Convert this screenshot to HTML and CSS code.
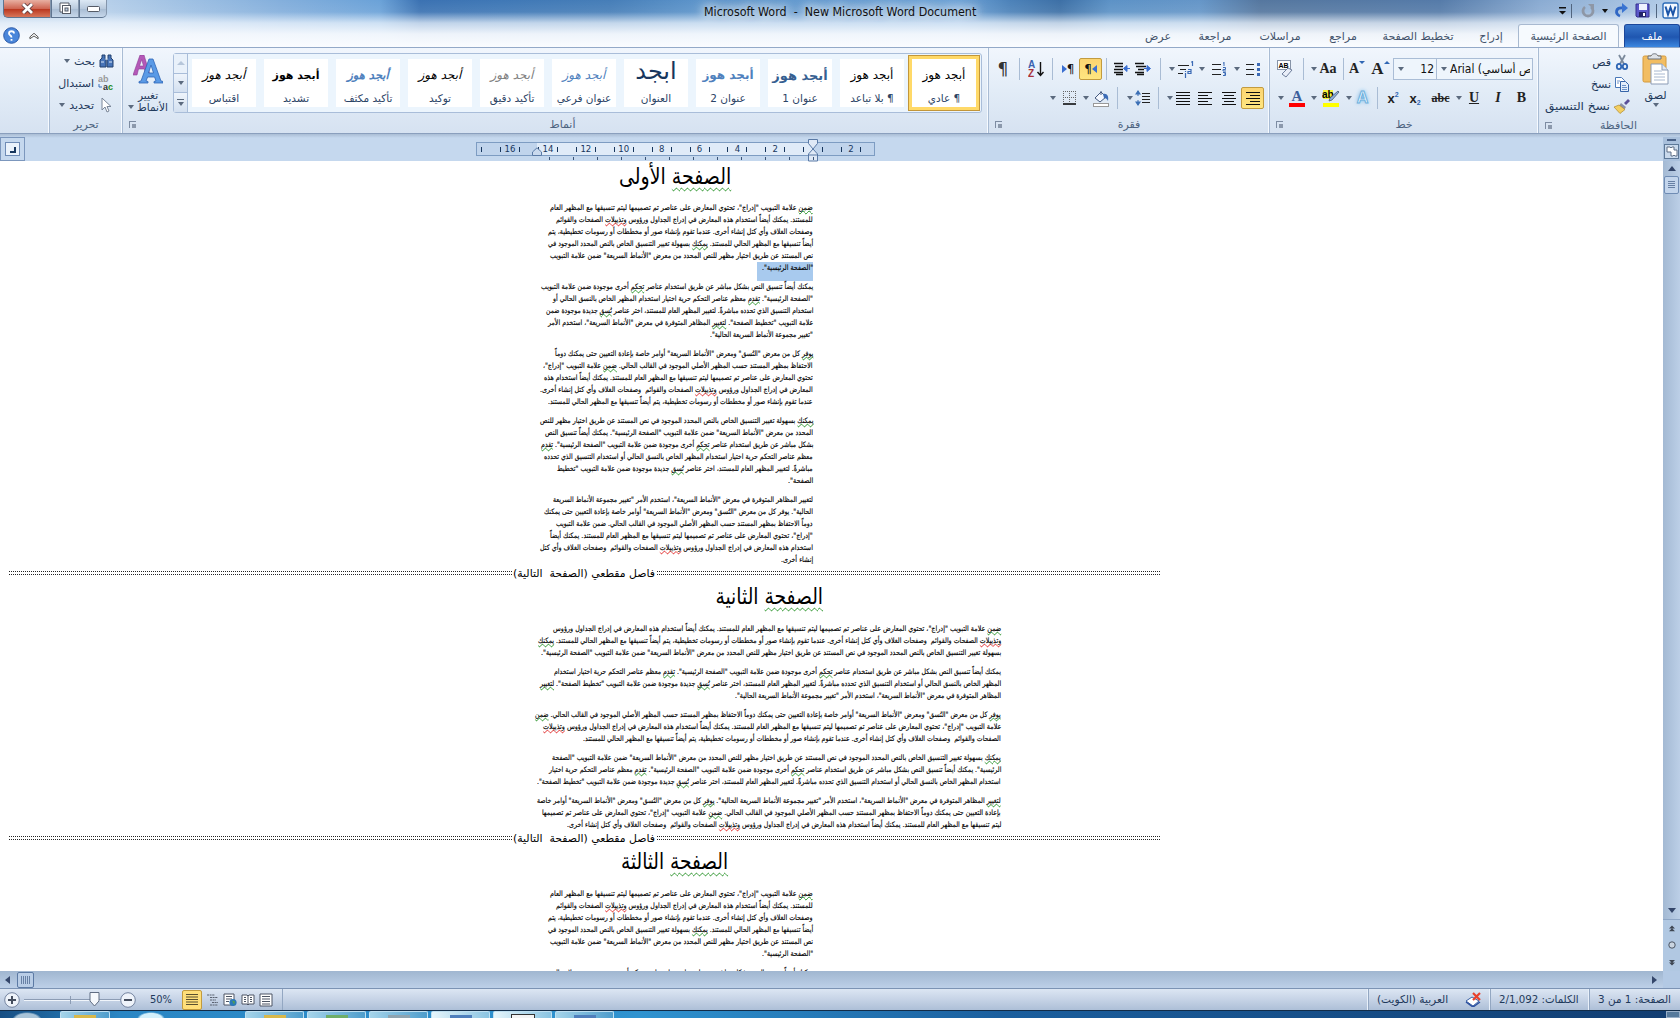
FILE: index.html
```html
<!DOCTYPE html>
<html lang="ar" dir="rtl">
<head>
    <meta charset="UTF-8">
    <title>Microsoft Word - New Microsoft Word Document</title>
    <link rel="stylesheet" href="styles.css">
</head>
<body>
    <header class="top">
        <div class="titlebar">
            <div class="quick">
                <svg width="17" height="17" viewBox="0 0 17 17"><rect x="1" y="1" width="15" height="15" rx="2" fill="#f4f9ff" stroke="#2c6cb8" stroke-width="1.4"/><path d="M3.500 4.500l2.500 8 2.500-7 2.500 7 2.500-8" fill="none" stroke="#1b55a8" stroke-width="2"/></svg>
                <i class="vsep"></i>
                <svg class="save" width="15" height="15" viewBox="0 0 15 15"><path d="M1 1h13v13H2l-1-1z" fill="#5a57c8" stroke="#34318e"/><rect x="4" y="1" width="8" height="6" fill="#eef2ff"/><rect x="4" y="9" width="7" height="5" fill="#23236a"/><rect x="8" y="10" width="2" height="3" fill="#fff"/></svg>
                <svg class="redo" width="14" height="15" viewBox="0 0 14 15"><path d="M6 13C1 11 1 4 9 5" fill="none" stroke="#2f66c4" stroke-width="2.8"/><path d="M8 0l6 5-6 5z" fill="#3a74d2"/></svg>
                <i class="arrow dark"></i>
                <svg class="undo" width="14" height="14" viewBox="0 0 14 14"><path d="M4 3a5 5 0 1 0 6 0" fill="none" stroke="#8e97a6" stroke-width="2.8"/><path d="M7 0h6v6z" fill="#8e97a6"/></svg>
                <i class="vsep"></i>
                <svg width="7" height="8" viewBox="0 0 7 8"><path d="M0 0h7v1.4H0zM0 4h7L3.500 7.500z" fill="#111"/></svg>
            </div>
            <div class="title" dir="ltr"><span data-w="272">Microsoft Word&nbsp; -&nbsp; New Microsoft Word Document</span></div>
            <div class="controls">
                <div class="ctl"><svg width="13" height="6"><rect x=".5" y=".5" width="12" height="5" rx="1" fill="#fff" stroke="#555b66"/></svg></div>
                <div class="ctl"><svg width="13" height="13" viewBox="0 0 13 13"><path d="M1 1h9v9H1z" fill="#fff" stroke="#555b66"/><rect x="3.500" y="3.500" width="8" height="8" fill="#fff" stroke="#555b66"/><rect x="6" y="6" width="3" height="3" fill="#bfd0e4" stroke="#555b66"/></svg></div>
                <div class="ctl close"><svg width="13" height="11" viewBox="0 0 13 11"><path d="M2 1l9 9M11 1L2 10" stroke="#5c3a3c" stroke-width="4.400"/><path d="M2 1l9 9M11 1L2 10" stroke="#fff" stroke-width="2.800"/></svg></div>
            </div>
        </div>
        <nav class="tabs">
            <div class="file">ملف</div>
            <div class="tab active">الصفحة الرئيسية</div>
            <div class="tab t54">إدراج</div>
            <div class="tab t92">تخطيط الصفحة</div>
            <div class="tab t58">مراجع</div>
            <div class="tab t68">مراسلات</div>
            <div class="tab t62">مراجعة</div>
            <div class="tab t52">عرض</div>
            <div class="help">
                <svg width="10" height="8" viewBox="0 0 11 8"><path d="M1 5l4.500-4L10 5v2L5.500 4 1 7z" fill="#fff" stroke="#444" stroke-width="1"/></svg>
                <svg width="17" height="17" viewBox="0 0 17 17"><circle cx="8.500" cy="8.500" r="7.800" fill="#4a86da" stroke="#2c5aa8"/><path d="M11 6.500C11 3.500 6 3.500 6 6.500M11 6.500c0 2-2.500 1.700-2.500 4M8.500 12v1.700" transform="matrix(-1 0 0 1 17 0)" fill="none" stroke="#fff" stroke-width="1.800"/></svg>
            </div>
        </nav>
    </header>

    <section class="ribbon">
        <div class="group clipboard">
            <div class="body">
                <div class="paste">
                    <svg width="27" height="32" viewBox="0 0 27 32"><rect x="1" y="3" width="23" height="26" rx="1.500" fill="#f2bd62" stroke="#d49a3c"/><path d="M6 5V3h3c1-3 6-3 7 0h3v3H6z" fill="#dfe3e8" stroke="#6b7078"/><path d="M9 11h11l6 6v14H9z" fill="#fff" stroke="#8b9bb5"/><path d="M20 11v6h6" fill="#dfe8f5" stroke="#8b9bb5"/><path d="M12 18h8M12 21h11M12 24h11M12 27h11" stroke="#a8b8d0"/></svg>
                    <span>لصق</span>
                    <i class="arrow"></i>
                </div>
                <div class="list">
                    <div class="cmd"><svg width="16" height="16" viewBox="0 0 16 16"><path d="M5 1l5 9M11 1L6 10" stroke="#7c8a9c" stroke-width="1.800"/><ellipse cx="5" cy="12.500" rx="2.200" ry="2.600" fill="none" stroke="#2f66b4" stroke-width="1.800"/><ellipse cx="11" cy="12.500" rx="2.200" ry="2.600" fill="none" stroke="#2f66b4" stroke-width="1.800"/></svg>قص</div>
                    <div class="cmd"><svg width="16" height="16" viewBox="0 0 16 16"><path d="M1.500 1.500h6l3 3v7h-9z" fill="#fff" stroke="#4a78b8"/><path d="M6.500 5.500h5l3 3v7h-8z" fill="#e4eefb" stroke="#3665a8"/><path d="M3 5h3M3 7h2M8 9.500h4M8 11.500h5M8 13.500h5" stroke="#6c93c8"/></svg>نسخ</div>
                    <div class="cmd"><svg width="17" height="15" viewBox="0 0 17 15"><path d="M11 4l4-4 2 2-4 4z" fill="#5a4f98"/><path d="M8 4l5 4-2 3-5-4z" fill="#8a8fa8"/><path d="M6 6l6 4.500-5 4L1 8z" fill="#f3cf62" stroke="#b08a2c" stroke-width=".7"/></svg><span data-w="65">نسخ التنسيق</span></div>
                </div>
            </div>
            <div class="label">الحافظة<i class="launch"></i></div>
        </div>

        <div class="group font">
            <div class="rows">
                <div class="row">
                    <div class="combo w97"><span class="face" dir="ltr">Arial (نص أساسي</span><i class="arrow"></i></div>
                    <div class="combo w43"><span class="size">12</span><i class="arrow"></i></div>
                    <div class="tool w25 serif big">A<i class="tri up m"></i></div>
                    <div class="tool w22 serif">A<i class="tri down m"></i></div>
                    <div class="bar w6"></div>
                    <div class="tool w24 serif aa">Aa</div><div class="drop w5"></div>
                    <div class="bar w16"></div>
                    <div class="tool w20"><svg width="16" height="18" viewBox="0 0 16 18"><rect x=".5" y=".5" width="13" height="9" fill="#fff" stroke="#8794a8"/><text x="1.500" y="8" class="tiny">AB</text><path d="M5 14l6-6 4 2-6 7z" fill="#e9eef8" stroke="#6f7f9c"/></svg></div>
                </div>
                <div class="row">
                    <div class="tool w23 serif">B</div>
                    <div class="tool w24 serif it">I</div>
                    <div class="tool w24 serif un">U</div><div class="drop w7"></div>
                    <div class="tool w29 serif strike">abc</div>
                    <div class="tool w22 xs" dir="ltr">x<sub>2</sub></div>
                    <div class="tool w22 xs" dir="ltr">x<sup>2</sup></div>
                    <div class="bar w9"></div>
                    <div class="tool w21 glow">A</div><div class="drop w7"></div>
                    <div class="tool w28"><svg width="18" height="17" viewBox="0 0 18 17"><rect x="1" y="0" width="10" height="9" fill="#f7f23c"/><text x="0" y="8" class="ab">ab</text><path d="M16 1l1 1-7 8-3 1 1-3z" fill="#8ab0e0" stroke="#49586c" stroke-width=".8"/><rect x="1" y="13" width="16" height="4" fill="#ff0"/></svg></div><div class="drop w7"></div>
                    <div class="tool w26"><svg width="16" height="17" viewBox="0 0 16 17"><text x="8" y="11" text-anchor="middle" class="fontcolor">A</text><rect x="0" y="13" width="16" height="4" fill="#f00"/></svg></div><div class="drop w7"></div>
                </div>
            </div>
            <div class="label">خط<i class="launch"></i></div>
        </div>

        <div class="group para">
            <div class="rows">
                <div class="row">
                    <div class="tool w23"><svg width="14" height="14" viewBox="0 0 14 14"><path d="M0 2.500h8M0 7.500h8M0 12.500h8" stroke="#222"/><path d="M11 1h3v3h-3zM11 6h3v3h-3zM11 11h3v3h-3z" fill="#3b6ab5"/></svg></div><div class="drop w9"></div>
                    <div class="tool w26"><svg width="15" height="14" viewBox="0 0 15 14"><path d="M0 2.500h9M0 7.500h9M0 12.500h9" stroke="#222"/><path d="M12 0v4M11 1h1M11 5.500h2.500v2H11v1.500h3M11 10.500h2.500v3H11M12 12h2" fill="none" stroke="#3b6ab5"/></svg></div><div class="drop w9"></div>
                    <div class="tool w22"><svg width="17" height="17" viewBox="0 0 17 17"><path d="M0 4.500h11M2 8.500h6M0 12.500h5" stroke="#222"/><path d="M14.500 0v5M13 1h2M10 8.500h3v4h-3v-2h3M7.500 12v5M7.500 10v1" fill="none" stroke="#3b6ab5" stroke-width="1.200"/></svg></div><div class="drop w7"></div>
                    <div class="bar w15"></div>
                    <div class="tool w20"><svg width="16" height="14" viewBox="0 0 16 14"><path d="M0 1.500h9M1 4.500h10M3 7.500h6M0 10.500h9M2 12.500h7" stroke="#111" stroke-width="1.300"/><path d="M9 6.500h3M12 3.500l3.500 3-3.500 3z" fill="#3b6fd0" stroke="#3b6fd0"/></svg></div>
                    <div class="tool w23"><svg width="16" height="14" viewBox="0 0 16 14"><path d="M0 1.500h9M1 4.500h8M0 7.500h9M0 10.500h9M2 12.500h7" stroke="#111" stroke-width="1.300"/><path d="M13 6.500h3M13 3.500l-3.500 3 3.500 3z" fill="#3b6fd0" stroke="#3b6fd0"/></svg></div>
                    <div class="bar w8"></div>
                    <div class="tool w23 on" dir="ltr"><b class="pil">¶</b><i class="tri left"></i></div>
                    <div class="tool w22" dir="ltr"><i class="tri right"></i><b class="pil">¶</b></div>
                    <div class="bar w9"></div>
                    <div class="tool w25"><svg width="16" height="18" viewBox="0 0 16 18"><text x="0" y="8" class="az">A</text><text x="0" y="17" class="az red">Z</text><path d="M12.500 2v13M9.500 12l3 3.500 3-3.500" fill="none" stroke="#111" stroke-width="1.400"/></svg></div>
                    <div class="bar w7"></div>
                    <div class="tool w26"><span class="pil large">¶</span></div>
                </div>
                <div class="row">
                    <div class="tool w23 on"><svg width="14" height="13"><path d="M0 .5h14M4 3.500h10M0 6.500h14M4 9.500h10M0 12.500h14" stroke="#111"/></svg></div>
                    <div class="tool w24"><svg width="14" height="13"><path d="M0 .5h14M2 3.500h10M0 6.500h14M2 9.500h10M0 12.500h14" stroke="#111"/></svg></div>
                    <div class="tool w24"><svg width="14" height="13"><path d="M0 .5h14M0 3.500h10M0 6.500h14M0 9.500h10M0 12.500h14" stroke="#111"/></svg></div>
                    <div class="tool w20"><svg width="14" height="13"><path d="M0 .5h14M0 3.500h14M0 6.500h14M0 9.500h14M0 12.500h14" stroke="#111"/></svg></div><div class="drop w7"></div>
                    <div class="bar w15"></div>
                    <div class="tool w17"><svg width="15" height="16" viewBox="0 0 15 16"><path d="M7 3.500h8M7 6.500h8M7 9.500h8M7 12.500h8" stroke="#222"/><path d="M3 1v5M3 10v5" stroke="#3b6fb5"/><path d="M0 4.500L3 0l3 4.500zM0 11.500L3 16l3-4.500z" fill="#3b6fb5"/></svg></div><div class="drop w9"></div>
                    <div class="bar w15"></div>
                    <div class="tool w18"><svg width="16" height="17" viewBox="0 0 16 17"><path d="M2 8l6-6 5 5-6 5z" fill="#f4f8ff" stroke="#44597e"/><path d="M8 5V1" stroke="#44597e"/><path d="M10 4c4-1 6 2 5 7-1-2-2-3-4-3z" fill="#3c6cb6"/><rect x=".5" y="13.500" width="15" height="3" fill="#fff" stroke="#999"/></svg></div><div class="drop w13"></div>
                    <div class="tool w20"><svg width="13" height="14"><path d="M.5 0v12M6.500 0v12M12.500 0v12M0 .5h13M0 6.500h13" stroke="#666" stroke-dasharray="1 1"/><path d="M0 13h13" stroke="#000" stroke-width="1.500"/></svg></div><div class="drop w13"></div>
                </div>
            </div>
            <div class="label">فقرة<i class="launch"></i></div>
        </div>

        <div class="group styles">
            <div class="body">
                <div class="gallery">
                    <div class="items">
                        <div class="item selected"><b>أبجد هوز</b><span>¶ عادي</span></div>
                        <div class="item"><b>أبجد هوز</b><span>¶ بلا تباعد</span></div>
                        <div class="item h1"><b>أبجد هوز</b><span>عنوان 1</span></div>
                        <div class="item h2"><b>أبجد هوز</b><span>عنوان 2</span></div>
                        <div class="item ttl"><b>ابجد</b><span>العنوان</span></div>
                        <div class="item sub"><b>أبجد هوز</b><span>عنوان فرعي</span></div>
                        <div class="item subtle"><b>أبجد هوز</b><span>تأكيد دقيق</span></div>
                        <div class="item em"><b>أبجد هوز</b><span>توكيد</span></div>
                        <div class="item intense"><b>أبجد هوز</b><span>تأكيد مكثف</span></div>
                        <div class="item strong"><b>أبجد هوز</b><span>تشديد</span></div>
                        <div class="item em"><b>أبجد هوز</b><span>اقتباس</span></div>
                    </div>
                    <div class="scroll">
                        <div class="off"><i class="tri up"></i></div>
                        <div><i class="arrow"></i></div>
                        <div><i class="dash"></i><i class="arrow"></i></div>
                    </div>
                </div>
                <div class="change">
                    <svg width="30" height="29" viewBox="0 0 30 29"><path d="M0 20L7 0h4l6 20h-4l-1.600-6H5.500L4 20zM6.500 11h4L8.700 4.500z" fill="#b458b8" stroke="#8c3c94" stroke-width=".6"/><path d="M6 28v-1.500l2-.5L16 4h4l8 22 2 .5V28h-9v-1.500l2-.5-1.400-4h-7L13 26l2 .5V28zM15.500 18h5L18 10z" fill="#5a9ae6" stroke="#2e66b6" stroke-width=".8"/></svg>
                    <span>تغيير</span>
                    <span>الأنماط<i class="arrow"></i></span>
                </div>
            </div>
            <div class="label">أنماط<i class="launch"></i></div>
        </div>

        <div class="group editing">
            <div class="list">
                <div class="cmd"><svg width="15" height="14" viewBox="0 0 15 14"><path d="M3 1h3v3l1 2v7H1V6l2-2zM9 1h3v3l2 2v7H8V6l1-2z" fill="#4774b8" stroke="#22406e"/><path d="M6 5h3M2 8h3M10 8h3" stroke="#dce8f8"/></svg>بحث<i class="arrow"></i></div>
                <div class="cmd"><svg width="16" height="16" viewBox="0 0 16 16"><text x="0" y="7" class="rep gray">ab</text><text x="5" y="15" class="rep">a<tspan fill="#1a8a1a">c</tspan></text><path d="M1 9v3h3" fill="none" stroke="#3b6fb5"/></svg>استبدال</div>
                <div class="cmd"><svg width="16" height="16" viewBox="0 0 16 16"><path d="M4 1v12l3-3 2 5 2-1-2-4.500h4z" fill="#fff" stroke="#7a8698"/></svg>تحديد<i class="arrow"></i></div>
            </div>
            <div class="label">تحرير</div>
        </div>
    </section>

    <div class="rulerbar">
        <div class="rulertoggle"><i class="split"></i><svg width="15" height="15" viewBox="0 0 15 15"><rect x=".5" y=".5" width="14" height="14" fill="#c9d9ec" stroke="#5c7898"/><path d="M3 3h3l1 1 1-1h2v3h3v6h-2l-1-1-1 1H7V8H3z" fill="#fff" stroke="#5f6f86"/></svg></div>
        <div class="ruler">
            <div class="out right"></div><div class="live"></div><div class="out"></div>
            <div class="cells"><span>2</span><span></span><span>2</span><span>4</span><span>6</span><span>8</span><span>10</span><span>12</span><span>14</span><span>16</span><span></span></div>
            <svg class="marker first" width="10" height="23" viewBox="0 0 10 23"><path d="M.5.5h9v4L5 10 .500 4.500zM5 10l4.500 5v7H.5v-7zM.5 16h9" fill="#dfe9f6" stroke="#5a7aa6"/></svg>
            <svg class="marker last" width="10" height="9" viewBox="0 0 10 9"><path d="M5 .8L9.500 5v3.500H.5V5z" fill="#c9d9ee" stroke="#5a7aa6"/></svg>
            <i class="stops"></i>
        </div>
        <div class="tabstop"><i></i></div>
    </div>

    <main class="work">
        <div class="vscroll">
            <i class="tri up v"></i>
            <div class="thumb"><i></i></div>
            <div class="track"></div>
            <i class="tri down v"></i>
            <div class="browse">
                <svg width="6" height="7" viewBox="0 0 8 8"><path d="M0 4L4 0l4 4zM0 7.500L4 3.500l4 4z" fill="#3e4652"/></svg>
                <svg width="8" height="8"><circle cx="4" cy="4" r="3.200" fill="#c9d4e0" stroke="#4b5563"/></svg>
                <svg width="6" height="7" viewBox="0 0 8 8"><path d="M0 .5l4 4 4-4zM0 4l4 4 4-4z" fill="#3e4652"/></svg>
            </div>
        </div>
        <div class="doc" id="doc"></div>
    </main>

    <div class="hscroll">
        <div class="corner"></div>
        <i class="tri right h"></i>
        <div class="fill"></div>
        <div class="hthumb"><i></i></div>
        <i class="tri left h"></i>
    </div>

    <footer class="status">
        <div class="cell c1"><span data-w="73">الصفحة: 1 من 3</span></div>
        <div class="cell c2"><span data-w="80">الكلمات: 2/1,092</span></div>
        <div class="cell c3"><svg width="17" height="15" viewBox="0 0 17 15"><path d="M1 9l6-4 7 4-6 5z" fill="#fff" stroke="#3c62a6"/><path d="M1 10l7 5 7-5" fill="none" stroke="#2c50a0" stroke-width="1.500"/><path d="M8 1l7 7M15 1L8 8" stroke="#e8402c" stroke-width="2.200"/></svg><span data-w="71">العربية (الكويت)</span></div>
        <div class="views">
            <svg width="15" height="14" viewBox="0 0 15 14"><path d="M1 1h12v12H1z" fill="#fff" stroke="#4c5564"/><path d="M3 3.500h8M3 6h8M3 8.500h8M3 11h8" stroke="#4c5564"/></svg>
            <svg width="15" height="14" viewBox="0 0 15 14"><path d="M1 2h5l1 1 1-1h5v9H8l-1 1-1-1H1z" fill="#fff" stroke="#4c5564"/><path d="M3 4.500h2M3 6.500h2M3 8.500h2M9 4.500h2M9 6.500h2M9 8.500h2M7 3v9" stroke="#4c5564"/></svg>
            <svg width="15" height="14" viewBox="0 0 15 14"><path d="M1 1h10v11H1z" fill="#fff" stroke="#4c5564"/><path d="M3 3.500h6M3 6h6M3 8.500h3" stroke="#4c5564"/><circle cx="10" cy="9.500" r="3.600" fill="#2a78b8"/><path d="M9 7.500l3 1-1 3z" fill="#52a04c"/></svg>
            <svg width="15" height="14" viewBox="0 0 15 14"><path d="M2 2h8M5 4.500h8M5 7h6M7 9.500h6M5 12h8" stroke="#5a6270" stroke-dasharray="2 .6"/></svg>
            <div class="viewon"><svg width="12" height="12"><path d="M0 .5h12M0 3h12M0 5.500h12M0 8h12M0 10.500h12" stroke="#5a5030"/></svg></div>
        </div>
        <div class="pct" dir="ltr">50%</div>
        <div class="zoom" dir="ltr">
            <svg width="134" height="20" viewBox="0 0 134 20"><path d="M20 9.500h100" stroke="#8c9cb4"/><path d="M20 10.500h100" stroke="#f0f5fb"/><path d="M66.500 6v8" stroke="#8c9cb4"/><path d="M86 2.500h9v8.500L90.500 16 86 11z" fill="#f5f8fc" stroke="#5f6c82"/><circle cx="8" cy="10" r="7.300" fill="#eef3fa" stroke="#7484a0"/><circle cx="124" cy="10" r="7.300" fill="#eef3fa" stroke="#7484a0"/><path d="M4 10h8M8 6v8M120 10h8" stroke="#454e5e" stroke-width="2"/></svg>
        </div>
    </footer>
    <div class="taskbar" dir="ltr">
        <div class="orb"></div>
        <div class="task w50"><i class="y"></i></div>
        <div class="ie"></div>
        <div class="task"><i class="y"></i></div><div class="task"><i class="g"></i></div><div class="task"><i></i></div><div class="task lit"><i class="b"></i></div><div class="task lit"><i class="w"></i></div><div class="task"><i class="b"></i></div>
        <div class="desk"></div>
    </div>
    <script src="script.js"></script>
</body>
</html>
```

FILE: styles.css
```css
* { box-sizing: border-box; }
body {
    margin: 0;
    width: 1680px;
    height: 1018px;
    overflow: hidden;
    display: flex;
    flex-direction: column;
    font-family: "DejaVu Sans", sans-serif;
    font-size: 11px;
    color: #1e395b;
    background: #c5d8ee;
}
svg { display: block; flex: none; }
i { font-style: normal; flex: none; }
[data-w] { display: inline-block; white-space: nowrap; flex: none; transform-origin: right center; }

/* title and tabs */
.top {
    height: 47px;
    background:
        linear-gradient(to bottom, rgba(255,255,255,0) 0, rgba(255,255,255,.08) 12px, rgba(244,249,255,.72) 23px, rgba(247,250,254,.95) 34px, #fafcff 47px),
        linear-gradient(to right, #b3cce6 0, #b4cee9 110px, #84afdc 280px, #6ba2d8 380px, #3b72b2 420px, #3f78b6 500px, #467eb8 610px, #5d95cb 700px, #6ba1d6 960px, #4c82b9 1010px, #3d70a6 1060px, #5c92c6 1110px, #6596c8 1200px, #55779f 1260px, #557ba9 1440px, #8aabd2 1540px, #b5cee9 1680px);
}
.titlebar { height: 24px; display: flex; justify-content: space-between; }
.quick { width: 260px; display: flex; align-items: center; padding: 0 1px 3px 0; }
.vsep { width: 1px; height: 14px; background: #51657f; margin: 0 5px; }
.save { margin-right: 1px; }
.redo { margin-right: 7px; }
.quick .arrow { margin: 0 6px 0 7px; }
.undo { margin-left: 4px; }
.title { width: 400px; text-align: center; font-family: "DejaVu Sans Condensed", sans-serif; font-size: 12px; line-height: 25px; color: #111; text-shadow: 0 0 8px #fff, 0 0 12px #fff, 0 0 16px #fff; }
.title [data-w] { transform-origin: center; }
.controls { width: 260px; padding-left: 3px; display: flex; justify-content: flex-end; }
.ctl {
    width: 28px; height: 18px;
    display: flex; align-items: center; justify-content: center;
    border: 1px solid #5f7590; border-top: 0; border-right-color: #8496ac;
    background: linear-gradient(#dce8f4, #b9cadd 50%, #a7bbd2 51%, #c6d7ea);
}
.ctl:first-child { border-bottom-right-radius: 5px; }
.ctl.close { width: 48px; border-bottom-left-radius: 5px; background: linear-gradient(#e8b0a2, #cf6653 50%, #b8331c 51%, #d8765a); }
.tabs { height: 23px; display: flex; font-size: 11px; line-height: 25px; text-align: center; color: #43536b; }
.file { width: 56px; color: #fff; background: linear-gradient(#3a78cc, #1f56b0 55%, #3d88e0); border: 1px solid #1c479a; border-bottom: 0; border-radius: 3px 3px 0 0; margin-left: 5px; }
.tab { white-space: nowrap; }
.active { width: 101px; background: #f6fafe; border: 1px solid #a8b9d0; border-bottom: 0; border-radius: 3px 3px 0 0; }
.active, .file { line-height: 23px; }
.t54 { width: 54px; } .t92 { width: 92px; } .t58 { width: 58px; } .t68 { width: 68px; } .t62 { width: 62px; } .t52 { width: 52px; }
.help { margin-right: auto; padding-left: 3px; display: flex; align-items: center; gap: 9px; }

/* ribbon */
.ribbon { height: 87px; display: flex; background: linear-gradient(#f1f6fd, #e2ecf7 50%, #d6e2f1); border-top: 1px solid #93a9c8; border-bottom: 1px solid #8a9fbd; }
.group { border-left: 1px solid #a9bcd4; box-shadow: -1px 0 #f6faff; display: flex; flex-direction: column; justify-content: space-between; }
.clipboard { width: 142px; } .font { width: 269px; } .para { width: 281px; } .styles { width: 866px; } .editing { width: 73px; }
.label { position: relative; height: 17px; line-height: 18px; text-align: center; color: #4d6380; }
.launch { position: absolute; left: 6px; top: 5px; width: 7px; height: 7px; border: 1px solid #7d8ca2; border-right: 0; border-bottom: 0; }
.launch::after { content: ""; position: absolute; left: 2px; top: 2px; width: 4px; height: 4px; background: #8c99ac; }
.clipboard .label { padding-left: 18px; }
.styles .label { padding-left: 14px; }
.body { display: flex; }
.arrow { display: inline-block; border: 3px solid transparent; border-top: 4px solid #5b6a7e; border-bottom: 0; }
.arrow.dark { border-top-color: #111; }
.clipboard .body { padding: 5px 11px 0 0; }
.paste, .change { display: flex; flex-direction: column; align-items: center; }
.paste span { line-height: 15px; margin-top: 3px; }
.list { display: flex; flex-direction: column; }
.clipboard .list { margin-right: 12px; margin-top: -2px; }
.cmd { height: 22px; display: flex; align-items: center; gap: 4px; white-space: nowrap; }
.clipboard .cmd { gap: 3px; }
.editing .list { padding: 2px 8px 0 0; }
.rows { padding: 10px 5px 0 0; display: flex; flex-direction: column; gap: 7px; }
.row { height: 22px; display: flex; align-items: center; }
.tool { height: 22px; display: flex; align-items: center; justify-content: center; color: #222; }
.on { border: 1px solid #c29b3f; border-radius: 2px; background: linear-gradient(#fbd471, #ffe680); }
.bar { height: 22px; background: linear-gradient(#a9bcd4, #a9bcd4) center / 1px 100% no-repeat; }
.drop { display: flex; justify-content: center; }
.drop::after { content: ""; border: 3px solid transparent; border-top: 4px solid #5b6a7e; border-bottom: 0; flex: none; }
.w5 { width: 5px; } .w6 { width: 6px; } .w7 { width: 7px; } .w8 { width: 8px; } .w9 { width: 9px; } .w13 { width: 13px; } .w15 { width: 15px; } .w16 { width: 16px; } .w17 { width: 17px; } .w18 { width: 18px; }
.w20 { width: 20px; } .w21 { width: 21px; } .w22 { width: 22px; } .w23 { width: 23px; } .w24 { width: 24px; } .w25 { width: 25px; } .w26 { width: 26px; } .w28 { width: 28px; } .w29 { width: 29px; } .w43 { width: 43px; } .w97 { width: 97px; }
.combo { height: 22px; border: 1px solid #aabdd6; background: #eef5fc; display: flex; align-items: center; justify-content: space-between; padding: 0 2px 0 4px; overflow: hidden; white-space: nowrap; color: #111; }
.combo + .combo { border-right: 0; }
.face, .size { font-family: "DejaVu Sans Condensed", sans-serif; font-size: 12px; }
.face { width: 80px; overflow: hidden; }
.serif { font: bold 14px "Liberation Serif", serif; direction: ltr; }
.tri.m { border-width: 0 3px; align-self: flex-start; margin-top: 3px; }
.tri.up.m { border-bottom: 3px solid #2f66b4; }
.tri.down.m { border-top: 3px solid #2f66b4; }
.xs { font: bold 13px "Liberation Sans", sans-serif; }
.xs sup, .xs sub { font-size: 7px; color: #2f66b4; line-height: 8px; }
.xs sup { align-self: flex-start; margin-top: 4px; }
.xs sub { align-self: flex-end; margin-bottom: 2px; }
.big { font-size: 17px; }
.aa { font-size: 14px; }
.it { font-style: italic; }
.un { text-decoration: underline; }
.strike { font-size: 12px; text-decoration: line-through; }
.glow { font: bold 16px "Liberation Sans", sans-serif; color: #eaf6ff; -webkit-text-stroke: 1px #6fb0dc; text-shadow: 0 0 4px #58aee8; }
.tiny { font: bold 7px "Liberation Sans", sans-serif; direction: ltr; }
.ab { font: bold 10px "Liberation Sans", sans-serif; direction: ltr; }
.fontcolor { font: bold 15px "Liberation Serif", serif; fill: #3c5f9c; direction: ltr; }
.az { font: bold 10px "Liberation Sans", sans-serif; fill: #3a62b0; direction: ltr; }
.az.red { fill: #a8323c; }
.rep { font: bold 9px "Liberation Sans", sans-serif; direction: ltr; fill: #333; }
.rep.gray { fill: #999; }
.pil { font-size: 12px; line-height: 13px; font-weight: normal; color: #111; }
.pil.large { font-size: 17px; line-height: 17px; color: #333; }
.tri { width: 0; height: 0; border: 4px solid transparent; }
.tri.left { border-right: 5px solid #3b6fd0; border-left: 0; }
.tri.right { border-left: 5px solid #3b6fd0; border-right: 0; }
.tri.up { border-bottom: 4px solid #b6c6da; border-top: 0; }
.tri.down { border-top: 5px solid #34466a; border-bottom: 0; }

/* style gallery */
.styles .body { padding: 5px 6px 0 0; }
.gallery { width: 809px; height: 60px; display: flex; border: 1px solid #a9bdd9; background: #ecf5fd; border-radius: 3px; }
.items { flex: 1; display: flex; gap: 8px; padding: 5px 5px 0 0; }
.item { width: 64px; height: 48px; background: #fff; display: flex; flex-direction: column; align-items: center; white-space: nowrap; }
.item b { height: 31px; line-height: 33px; font-weight: normal; color: #000; font-size: 12px; }
.item span { line-height: 17px; font-size: 10.500px; color: #2c4466; }
.selected { outline: 3px solid #ffd968; box-shadow: 0 0 0 4px #c2963a; }
.h1 b { font-weight: bold; color: #365f91; font-size: 13px; }
.h2 b { font-weight: bold; color: #4f81bd; font-size: 12px; }
.ttl b { color: #17365d; font-size: 24px; line-height: 25px; }
.sub b { font-style: italic; color: #4f81bd; }
.subtle b { font-style: italic; color: #808080; }
.em b { font-style: italic; }
.intense b { font-style: italic; font-weight: bold; color: #4f81bd; font-size: 11.500px; }
.strong b { font-weight: bold; font-size: 11px; }
.scroll { width: 14px; border-right: 1px solid #a9bdd9; display: flex; flex-direction: column; }
.scroll div { flex: 1; display: flex; flex-direction: column; align-items: center; justify-content: center; gap: 2px; border-top: 1px solid #a9bdd9; background: linear-gradient(#eef4fb, #d3e0f0); }
.scroll .off { background: #e9f1fa; border-top: 0; }
.dash { width: 7px; height: 1px; background: #5b6a7e; }
.change { width: 50px; padding-top: 2px; line-height: 12px; }
.change span { white-space: nowrap; font-size: 10.500px; }
.change svg { margin-bottom: 5px; }
.change .arrow { margin-right: 3px; vertical-align: 2px; }

/* ruler */
.rulerbar { height: 27px; padding-top: 3px; display: flex; background: linear-gradient(#aabdd4, #c5d8ee 4px); }
.rulertoggle { width: 17px; display: flex; flex-direction: column; align-items: center; gap: 3px; background: #a9c0dc; padding-top: 2px; }
.split { width: 9px; height: 2px; background: #4a6288; }
.ruler { position: relative; margin: 5px 788px 0 451px; width: 399px; height: 14px; display: flex; border: 1px solid #7d9cc2; }
.out { flex: 1; background: #c0d4ec; }
.out.right { flex: none; width: 61px; }
.live { width: 276px; background: #e0ebf8; }
.cells { position: absolute; inset: 0; padding-right: 4px; display: flex; overflow: hidden; font-family: "DejaVu Sans Condensed", sans-serif; font-size: 9.500px; line-height: 12px; color: #17365d; }
.cells span { width: 37.900px; flex: none; text-align: center; background: linear-gradient(#17365d, #17365d) 9px 4px / 1px 5px no-repeat, linear-gradient(#17365d, #17365d) 28px 4px / 1px 5px no-repeat; }
.marker { position: absolute; top: -4px; }
.marker.first { left: 331px; }
.marker.last { left: 55px; top: 4px; }
.stops { position: absolute; left: 72px; top: 14px; width: 265px; height: 3px; background: repeating-linear-gradient(to right, #3c5578 0 1px, transparent 1px 24px); }
.tabstop { width: 25px; border: 1px solid #7c97bd; padding: 4px; margin-right: auto; }
.tabstop i { display: block; height: 14px; width: 15px; border: 1px solid #6f8cb6; background: linear-gradient(#17365d, #17365d) 8px 4px / 2px 6px no-repeat, linear-gradient(#17365d, #17365d) 4px 8px / 6px 2px no-repeat, #eaf2fb; }

/* document */
.work { height: 810px; display: flex; background: #fff; }
.vscroll { width: 17px; display: flex; flex-direction: column; align-items: center; background: linear-gradient(to right, #a3b9d3, #bccfe7); }
.tri.v.up { border-bottom: 5px solid #34466a; margin: 5px 0 5px; }
.thumb { width: 15px; height: 18px; border: 1px solid #6f8cb4; border-radius: 2px; background: #c3d5ec; padding: 4px 3px; }
.thumb i { display: block; height: 8px; background: repeating-linear-gradient(#6780a4 0 1px, transparent 1px 2px); }
.track { flex: 1; }
.browse { width: 17px; height: 52px; margin-top: 6px; background: #b1c8e2; border-top: 1px solid #8ea6c6; display: flex; flex-direction: column; align-items: center; justify-content: space-around; }
.doc { flex: 1; overflow: hidden; color: #000; }
.sec { width: 276px; margin-right: 850px; }
.sec.wide { width: 464px; margin-right: 662px; }
.sec h1 { margin: 0; height: 42px; line-height: 30px; font-weight: normal; font-size: 23px; display: flex; justify-content: center; }
.sec h1 [data-w] { transform-origin: center; }
.sec:first-child h1 { height: 41px; }
.sec p { margin: 0 0 7px; font-size: 7.500px; -webkit-text-stroke: .15px #000; }
.sec p:last-child { margin: 0; }
.line { display: block; height: 12px; line-height: 11px; white-space: nowrap; }
.sel { width: 56px; background: #a8caee; box-shadow: 0 7px #a8caee; }
.gr, .rd { text-decoration: underline wavy #1f8f1f 1px; text-decoration-skip-ink: none; text-underline-offset: 0; }
.rd { text-decoration-color: #e02020; }
h1 .gr { text-underline-offset: 3px; }
.break { width: 1151px; height: 15px; margin-right: 503px; display: flex; align-items: center; font-size: 11px; line-height: 14px; }
.break div { width: 144px; padding-right: 2px; }
.break i { flex: 1; height: 4px; margin-bottom: 1px; background: repeating-linear-gradient(to right, #222 0 1px, transparent 1px 2px) top / 100% 1px no-repeat, repeating-linear-gradient(to right, #222 0 1px, transparent 1px 2px) bottom / 100% 1px no-repeat; }

/* bottom bars */
.hscroll { height: 17px; display: flex; align-items: center; background: linear-gradient(#a0b6d0, #bdd0e8); }
.corner { width: 17px; height: 17px; background: #b3c9e4; }
.tri.h { border-left-color: #34466a; margin-right: 6px; }
.tri.left.h { border-left: 0; border-right-color: #34466a; margin: 0 7px 0 5px; }
.fill { flex: 1; }
.hthumb { width: 17px; height: 16px; border: 1px solid #5c7aa4; border-radius: 2px; background: #b9cde6; padding: 3px 3px; }
.hthumb i { display: block; width: 9px; height: 8px; background: repeating-linear-gradient(to right, #6780a4 0 1px, transparent 1px 2px); }
.status { height: 22px; display: flex; align-items: center; background: linear-gradient(#dce6f3, #c6d3e6 50%, #adbfd7); border-top: 1px solid #7c93b4; }
.cell { height: 21px; line-height: 19px; display: flex; align-items: center; border-left: 1px solid #93a7c2; box-shadow: -1px 0 #e8f0fa; }
.c1 { width: 91px; padding-right: 9px; } .c2 { width: 99px; padding-right: 10px; } .c3 { width: 122px; padding-right: 8px; gap: 17px; }
.views { margin-right: auto; height: 21px; border-right: 1px solid #93a7c2; padding-right: 8px; display: flex; align-items: center; gap: 3px; }
.viewon { width: 20px; height: 20px; border: 1px solid #c29b3f; border-radius: 2px; background: #ffdf7a; display: flex; align-items: center; justify-content: center; }
.pct { width: 42px; text-align: center; font-family: "DejaVu Sans Condensed", sans-serif; }
.zoom { width: 140px; padding-left: 4px; }
.taskbar { height: 8px; display: flex; gap: 3px; overflow: hidden; border-top: 1px solid #122c48; background: linear-gradient(to right, #174f84, #2a86c4 120px, #2f93d0 640px, #1b5f9e 1000px, #123e72 1660px); }
.orb { width: 57px; background: radial-gradient(ellipse 15px 8px at 27px 9px, #a9c4d8 80%, transparent 100%); }
.task { width: 59px; border: 1px solid #bfe0f2; border-bottom: 0; border-radius: 2px 2px 0 0; background: linear-gradient(to right, #a5d4ea, #4e9dcc); display: flex; justify-content: center; align-items: flex-end; }
.w50 { width: 50px; }
.lit { background: linear-gradient(to right, #e6f5fb, #8ac4e2); }
.task i { width: 22px; height: 3px; background: #8fa4b0; }
.task .y { background: #d8b84a; } .task .g { background: #6fae68; } .task .b { background: #4f7fbc; } .task .w { background: #f4f4f4; outline: 1px solid #333; }
.ie { width: 129px; background: radial-gradient(ellipse 14px 7px at 38px 8px, #d4f0fb 80%, transparent 100%); }
.desk { margin-left: auto; width: 14px; border: 1px solid #9ab0c8; background: #567a9c; }
```

FILE: script.js
```javascript
// [line width, text]; {word} = grammar mark, [word] = spelling mark
const first = [
    [263, '{ضمن} علامة التبويب "إدراج"، تحتوي المعارض على عناصر تم تصميمها ليتم تنسيقها مع المظهر العام'],
    [257, 'للمستند. يمكنك أيضاً استخدام هذه المعارض في إدراج الجداول ورؤوس [وتذييلات] الصفحات والقوائم'],
    [265, 'وصفحات الغلاف وأي كتل إنشاء أخرى. عندما تقوم بإنشاء صور أو مخططات أو رسومات تخطيطية، يتم'],
    [265, 'أيضاً تنسيقها مع المظهر الحالي للمستند. {يمكنك} بسهولة تغيير التنسيق الخاص بالنص المحدد الموجود في'],
    [263, 'نص المستند عن طريق اختيار مظهر للنص المحدد من معرض "الأنماط السريعة" ضمن علامة التبويب'],
    [51, '"الصفحة الرئيسية".', 'sel']
];
const second = [
    [272, 'يمكنك أيضاً تنسيق النص بشكل مباشر عن طريق استخدام عناصر {تحكم} أخرى موجودة ضمن علامة التبويب'],
    [260, '"الصفحة الرئيسية". {تقدم} معظم عناصر التحكم حرية اختيار استخدام المظهر الخاص بالنسق الحالي أو'],
    [267, 'استخدام التنسيق الذي تحدده مباشرةً. لتغيير المظهر العام للمستند، اختر عناصر {نُسق} جديدة موجودة ضمن'],
    [265, 'علامة التبويب "تخطيط الصفحة". {لتغيير} المظاهر المتوفرة في معرض "الأنماط السريعة"، استخدم الأمر'],
    [103, '"تغيير مجموعة الأنماط السريعة الحالية".']
];
const sections = [
    { title: ['{الصفحة} الأولى', 112], paras: [first, second, [
        [258, '{يوفر} كل من معرض "النُسق" ومعرض "الأنماط السريعة" أوامر خاصة بإعادة التعيين حتى يمكنك دوماً'],
        [270, 'الاحتفاظ بمظهر المستند حسب المظهر الأصلي الموجود في القالب الحالي. {ضمن} علامة التبويب "إدراج"،'],
        [269, 'تحتوي المعارض على عناصر تم تصميمها ليتم تنسيقها مع المظهر العام للمستند. يمكنك أيضاً استخدام هذه'],
        [273, 'المعارض في إدراج الجداول ورؤوس [وتذييلات] الصفحات والقوائم&nbsp; وصفحات الغلاف وأي كتل إنشاء أخرى.'],
        [265, 'عندما تقوم بإنشاء صور أو مخططات أو رسومات تخطيطية، يتم أيضاً تنسيقها مع المظهر الحالي للمستند.']
    ], [
        [273, '{يمكنك} بسهولة تغيير التنسيق الخاص بالنص المحدد الموجود في نص المستند عن طريق اختيار مظهر للنص'],
        [268, 'المحدد من معرض "الأنماط السريعة" ضمن علامة التبويب "الصفحة الرئيسية". يمكنك أيضاً تنسيق النص'],
        [272, 'بشكل مباشر عن طريق استخدام عناصر {تحكم} أخرى موجودة ضمن علامة التبويب "الصفحة الرئيسية". {تقدم}'],
        [269, 'معظم عناصر التحكم حرية اختيار استخدام المظهر الخاص بالنسق الحالي أو استخدام التنسيق الذي تحدده'],
        [256, 'مباشرةً. لتغيير المظهر العام للمستند، اختر عناصر {نُسق} جديدة موجودة ضمن علامة التبويب "تخطيط'],
        [25, 'الصفحة".']
    ], [
        [260, 'لتغيير المظاهر المتوفرة في معرض "الأنماط السريعة"، استخدم الأمر "تغيير مجموعة الأنماط السريعة'],
        [269, 'الحالية". يوفر كل من معرض "النُسق" ومعرض "الأنماط السريعة" أوامر خاصة بإعادة التعيين حتى يمكنك'],
        [257, 'دوماً الاحتفاظ بمظهر المستند حسب المظهر الأصلي الموجود في القالب الحالي. ضمن علامة التبويب'],
        [263, '"إدراج"، تحتوي المعارض على عناصر تم تصميمها ليتم تنسيقها مع المظهر العام للمستند. يمكنك أيضاً'],
        [273, 'استخدام هذه المعارض في إدراج الجداول ورؤوس [وتذييلات] الصفحات والقوائم&nbsp; وصفحات الغلاف وأي كتل'],
        [32, 'إنشاء أخرى.']
    ]] },
    { title: ['{الصفحة} الثانية', 108], wide: true, paras: [[
        [448, '{ضمن} علامة التبويب "إدراج"، تحتوي المعارض على عناصر تم تصميمها ليتم تنسيقها مع المظهر العام للمستند. يمكنك أيضاً استخدام هذه المعارض في إدراج الجداول ورؤوس'],
        [463, '[وتذييلات] الصفحات والقوائم&nbsp; وصفحات الغلاف وأي كتل إنشاء أخرى. عندما تقوم بإنشاء صور أو مخططات أو رسومات تخطيطية، يتم أيضاً تنسيقها مع المظهر الحالي للمستند. {يمكنك}'],
        [460, 'بسهولة تغيير التنسيق الخاص بالنص المحدد الموجود في نص المستند عن طريق اختيار مظهر للنص المحدد من معرض "الأنماط السريعة" ضمن علامة التبويب "الصفحة الرئيسية".']
    ], [
        [447, 'يمكنك أيضاً تنسيق النص بشكل مباشر عن طريق استخدام عناصر {تحكم} أخرى موجودة ضمن علامة التبويب "الصفحة الرئيسية". {تقدم} معظم عناصر التحكم حرية اختيار استخدام'],
        [461, 'المظهر الخاص بالنسق الحالي أو استخدام التنسيق الذي تحدده مباشرةً. لتغيير المظهر العام للمستند، اختر عناصر {نُسق} جديدة موجودة ضمن علامة التبويب "تخطيط الصفحة". {لتغيير}'],
        [266, 'المظاهر المتوفرة في معرض "الأنماط السريعة"، استخدم الأمر "تغيير مجموعة الأنماط السريعة الحالية".']
    ], [
        [466, '{يوفر} كل من معرض "النُسق" ومعرض "الأنماط السريعة" أوامر خاصة بإعادة التعيين حتى يمكنك دوماً الاحتفاظ بمظهر المستند حسب المظهر الأصلي الموجود في القالب الحالي. {ضمن}'],
        [458, 'علامة التبويب "إدراج"، تحتوي المعارض على عناصر تم تصميمها ليتم تنسيقها مع المظهر العام للمستند. يمكنك أيضاً استخدام هذه المعارض في إدراج الجداول ورؤوس [وتذييلات]'],
        [418, 'الصفحات والقوائم&nbsp; وصفحات الغلاف وأي كتل إنشاء أخرى. عندما تقوم بإنشاء صور أو مخططات أو رسومات تخطيطية، يتم أيضاً تنسيقها مع المظهر الحالي للمستند.']
    ], [
        [449, '{يمكنك} بسهولة تغيير التنسيق الخاص بالنص المحدد الموجود في نص المستند عن طريق اختيار مظهر للنص المحدد من معرض "الأنماط السريعة" ضمن علامة التبويب "الصفحة'],
        [452, 'الرئيسية". يمكنك أيضاً تنسيق النص بشكل مباشر عن طريق استخدام عناصر {تحكم} أخرى موجودة ضمن علامة التبويب "الصفحة الرئيسية". {تقدم} معظم عناصر التحكم حرية اختيار'],
        [464, 'استخدام المظهر الخاص بالنسق الحالي أو استخدام التنسيق الذي تحدده مباشرةً. لتغيير المظهر العام للمستند، اختر عناصر {نُسق} جديدة موجودة ضمن علامة التبويب "تخطيط الصفحة".']
    ], [
        [464, '{لتغيير} المظاهر المتوفرة في معرض "الأنماط السريعة"، استخدم الأمر "تغيير مجموعة الأنماط السريعة الحالية". {يوفر} كل من معرض "النُسق" ومعرض "الأنماط السريعة" أوامر خاصة'],
        [459, 'بإعادة التعيين حتى يمكنك دوماً الاحتفاظ بمظهر المستند حسب المظهر الأصلي الموجود في القالب الحالي. {ضمن} علامة التبويب "إدراج"، تحتوي المعارض على عناصر تم تصميمها'],
        [434, 'ليتم تنسيقها مع المظهر العام للمستند. يمكنك أيضاً استخدام هذه المعارض في إدراج الجداول ورؤوس [وتذييلات] الصفحات والقوائم&nbsp; وصفحات الغلاف وأي كتل إنشاء أخرى.']
    ]] },
    { title: ['{الصفحة} الثالثة', 107], paras: [first.map(l => l.slice(0, 2)), second.slice(0, 1)] }
];

const mark = t => t
    .replace(/\{(.+?)\}/g, '<span class="gr">$1</span>')
    .replace(/\[(.+?)\]/g, '<span class="rd">$1</span>');

document.getElementById('doc').innerHTML = sections.map(s =>
    `<div class="sec${s.wide ? ' wide' : ''}"><h1><span data-w="${s.title[1]}">${mark(s.title[0])}</span></h1>` +
    s.paras.map(p => '<p>' + p.map(([w, t, c]) =>
        `<span class="line ${c || ''}"><span data-w="${w}">${mark(t)}</span></span>`).join('') + '</p>').join('') +
    '</div>'
).join('<div class="break"><i></i><div><span data-w="142">فاصل مقطعي (الصفحة&nbsp; التالية)</span></div><i></i></div>');

// squeeze every measured run to its set width
document.querySelectorAll('[data-w]').forEach(el => {
    el.style.transform = `scaleX(${el.dataset.w / el.offsetWidth})`;
});
```
